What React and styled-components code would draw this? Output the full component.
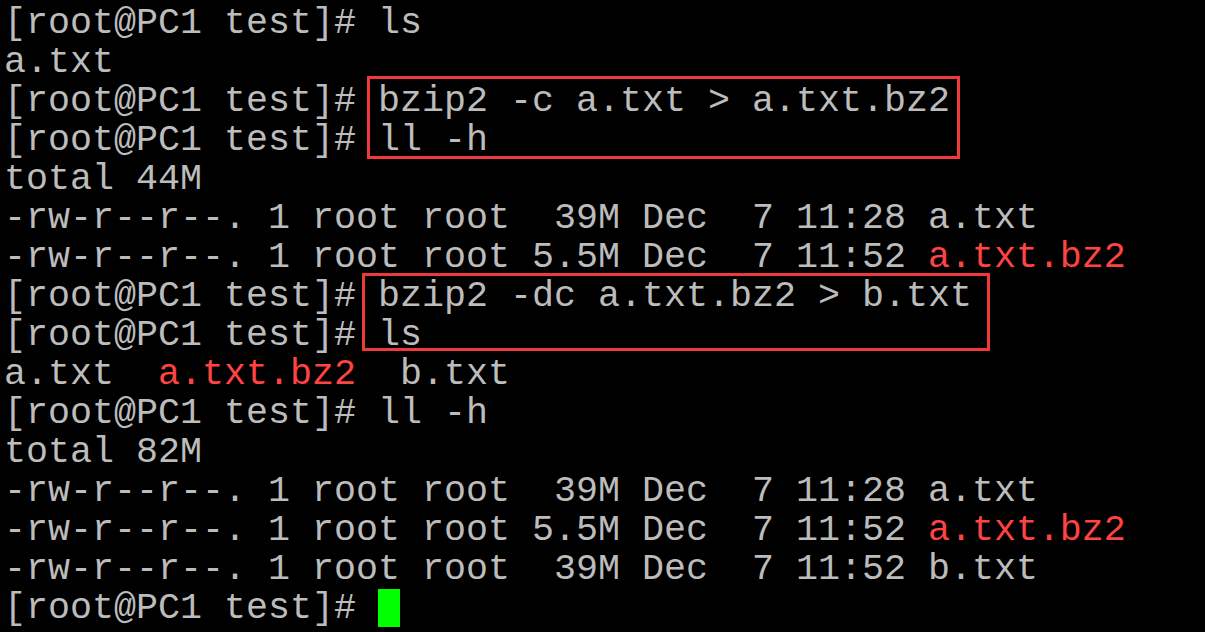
import React from 'react';
import styled, { createGlobalStyle } from 'styled-components';

const GlobalStyle = createGlobalStyle`
	html, body {
		margin: 0;
		padding: 0;
		background: #000;
	}
`;

const Terminal = styled.div`
	position: relative;
	width: 1205px;
	height: 632px;
	overflow: hidden;
	background: #000;
	box-sizing: border-box;
	padding: 4px 0 0 4px;
	font-family: "Liberation Mono", "Courier New", monospace;
	font-size: 36.67px;
	line-height: 39px;
	color: #bcbcbc;
`;

const Line = styled.div`
	height: 39px;
	white-space: pre;
`;

const Red = styled.span`
	color: #ff4343;
`;

const Cursor = styled.span`
	display: inline-block;
	width: 22px;
	height: 38px;
	vertical-align: top;
	background: #00ff00;
`;

const Mark = styled.div`
	position: absolute;
	left: ${(p) => p.left}px;
	top: ${(p) => p.top}px;
	width: ${(p) => p.width}px;
	height: ${(p) => p.height}px;
	border: 3px solid #f03a3a;
	box-sizing: border-box;
`;

const prompt = '[root@PC1 test]# ';

const lines = [
	[prompt + 'ls'],
	['a.txt'],
	[prompt + 'bzip2 -c a.txt > a.txt.bz2'],
	[prompt + 'll -h'],
	['total 44M'],
	['-rw-r--r--. 1 root root  39M Dec  7 11:28 a.txt'],
	['-rw-r--r--. 1 root root 5.5M Dec  7 11:52 ', { red: 'a.txt.bz2' }],
	[prompt + 'bzip2 -dc a.txt.bz2 > b.txt'],
	[prompt + 'ls'],
	['a.txt  ', { red: 'a.txt.bz2' }, '  b.txt'],
	[prompt + 'll -h'],
	['total 82M'],
	['-rw-r--r--. 1 root root  39M Dec  7 11:28 a.txt'],
	['-rw-r--r--. 1 root root 5.5M Dec  7 11:52 ', { red: 'a.txt.bz2' }],
	['-rw-r--r--. 1 root root  39M Dec  7 11:52 b.txt'],
];

const App = () => (
	<>
		<GlobalStyle />
		<Terminal>
			{lines.map((parts, i) => (
				<Line key={i}>
					{parts.map((p, j) => (typeof p === 'string' ? p : <Red key={j}>{p.red}</Red>))}
				</Line>
			))}
			<Line>
				{prompt}
				<Cursor />
			</Line>
			<Mark left={367} top={76} width={593} height={83} />
			<Mark left={362} top={273} width={628} height={78} />
		</Terminal>
	</>
);

export default App;
